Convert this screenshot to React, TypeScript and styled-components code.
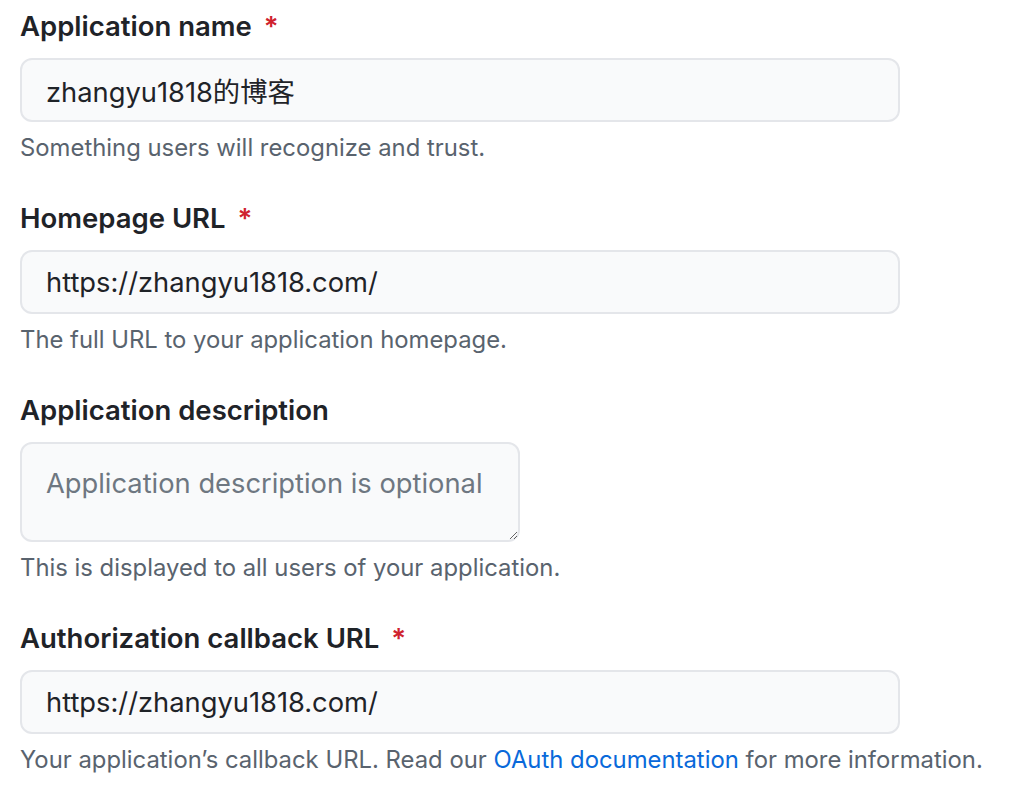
import React from 'react';
import styled, { createGlobalStyle } from 'styled-components';

const GlobalStyle = createGlobalStyle`
  html, body {
    margin: 0;
    padding: 0;
    background: #ffffff;
  }
  body {
    font-family: Inter, "Noto Sans CJK SC", sans-serif;
    color: #1f2328;
  }
`;

const Form = styled.form`
  display: flex;
  flex-direction: column;
  gap: 34px;
  padding: 6px 0 0 20px;
  width: 1008px;
  box-sizing: border-box;
`;

const Group = styled.div`
  display: flex;
  flex-direction: column;
`;

const Label = styled.label`
  font-size: 27.5px;
  font-weight: 600;
  line-height: 40px;
  height: 40px;
  margin-bottom: 12px;
  color: #1f2328;
`;

const Required = styled.span`
  color: #cf222e;
  margin-left: 12px;
`;

const fieldBase = `
  box-sizing: border-box;
  background: #f9fafb;
  border: 2px solid #e4e6ea;
  border-radius: 12px;
  padding: 0 24px;
  font-family: Inter, "Noto Sans CJK SC", sans-serif;
  font-size: 27.3px;
  color: #1f2328;
  outline: none;
`;

const TextInput = styled.input<{ $width: number }>`
  ${fieldBase}
  width: ${(p) => p.$width}px;
  height: 64px;
`;

const TextArea = styled.textarea<{ $width: number }>`
  ${fieldBase}
  width: ${(p) => p.$width}px;
  height: 100px;
  padding-top: 20px;
  line-height: 40px;
  resize: vertical;
  &::placeholder {
    color: #6e7781;
  }
`;

const Hint = styled.p`
  margin: 10px 0 0;
  font-size: 23.85px;
  line-height: 32px;
  color: #59636e;
`;

const Link = styled.a`
  color: #0969da;
  text-decoration: none;
`;

export default function App() {
  return (
    <>
      <GlobalStyle />
      <Form onSubmit={(e) => e.preventDefault()}>
        <Group>
          <Label>
            Application name<Required>*</Required>
          </Label>
          <TextInput $width={880} defaultValue="zhangyu1818的博客" />
          <Hint>Something users will recognize and trust.</Hint>
        </Group>
        <Group>
          <Label>
            Homepage URL<Required>*</Required>
          </Label>
          <TextInput $width={880} defaultValue="https://zhangyu1818.com/" />
          <Hint>The full URL to your application homepage.</Hint>
        </Group>
        <Group>
          <Label>Application description</Label>
          <TextArea $width={500} placeholder="Application description is optional" />
          <Hint>This is displayed to all users of your application.</Hint>
        </Group>
        <Group>
          <Label>
            Authorization callback URL<Required>*</Required>
          </Label>
          <TextInput $width={880} defaultValue="https://zhangyu1818.com/" />
          <Hint>
            Your application’s callback URL. Read our{' '}
            <Link href="#">OAuth documentation</Link> for more information.
          </Hint>
        </Group>
      </Form>
    </>
  );
}
